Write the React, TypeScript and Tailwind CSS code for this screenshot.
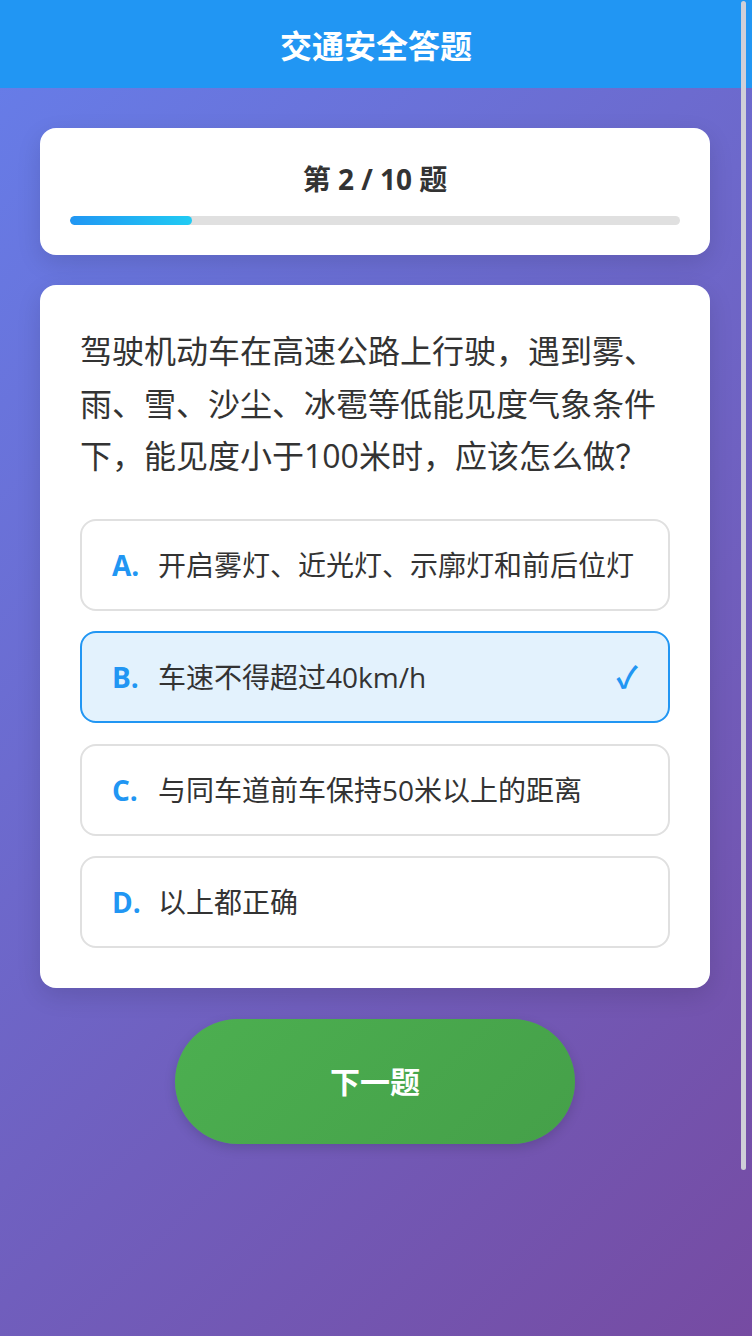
import React from "react";

const options = [
  { key: "A", text: "开启雾灯、近光灯、示廓灯和前后位灯" },
  { key: "B", text: "车速不得超过40km/h" },
  { key: "C", text: "与同车道前车保持50米以上的距离" },
  { key: "D", text: "以上都正确" },
];

export default function App() {
  const selected = "B";
  const current = 2;
  const total = 10;
  const pct = (current / total) * 100;

  return (
    <div
      className="relative h-screen overflow-hidden bg-[linear-gradient(135deg,#667eea_0%,#764ba2_100%)] text-[#333]"
      style={{ fontFamily: '"Open Sans", "Noto Sans CJK SC", sans-serif' }}
    >
      <header className="flex h-[88px] items-center justify-center bg-[#2196F3] pt-[4px]">
        <h1 className="text-[32px] font-bold leading-none text-white">交通安全答题</h1>
      </header>

      <main className="flex w-[750px] flex-col px-[40px] pt-[40px]">
        {/* progress card */}
        <section className="rounded-[16px] bg-white px-[30px] pb-[30px] pt-[30px] shadow-[0_8px_24px_rgba(0,0,0,0.12)]">
          <div className="text-center text-[28px] font-bold leading-[42px] text-[#333]">
            第 {current} / {total} 题
          </div>
          <div className="mt-[16px] h-[9px] w-full overflow-hidden rounded-full bg-[#e0e0e0]">
            <div
              className="h-full rounded-full bg-[linear-gradient(90deg,#2196F3,#21CBF3)]"
              style={{ width: `${pct}%` }}
            />
          </div>
        </section>

        {/* question card */}
        <section className="mt-[30px] rounded-[16px] bg-white p-[40px] shadow-[0_8px_24px_rgba(0,0,0,0.12)]">
          <p className="mb-[36px] text-[32px] leading-[52.5px] text-[#333]">
            驾驶机动车在高速公路上行驶，遇到雾、雨、雪、沙尘、冰雹等低能见度气象条件下，能见度小于100米时，应该怎么做？
          </p>
          <div className="flex flex-col gap-[20.5px]">
            {options.map((o) => {
              const active = o.key === selected;
              return (
                <div
                  key={o.key}
                  className={
                    active
                      ? "flex h-[92px] items-center rounded-[16px] border-2 border-[#2196F3] bg-[#e3f2fd] px-[30px]"
                      : "flex h-[92px] items-center rounded-[16px] border-2 border-[#e0e0e0] bg-white px-[30px]"
                  }
                >
                  <span className="mr-[19px] w-[27px] whitespace-nowrap text-[28px] font-bold leading-[28px] text-[#2196F3]">
                    {o.key}.
                  </span>
                  <span className="flex-1 text-[28px] leading-[28px] text-[#333]">{o.text}</span>
                  {active && (
                    <span className="text-[30px] font-semibold leading-[28px] text-[#2196F3]">✓</span>
                  )}
                </div>
              );
            })}
          </div>
        </section>

        <div className="mt-[31px] flex justify-center">
          <button className="h-[125px] w-[400px] rounded-full bg-[linear-gradient(135deg,#4CAF50,#45a049)] text-[30px] font-bold text-white shadow-[0_4px_12px_rgba(0,0,0,0.15)]">
            下一题
          </button>
        </div>
      </main>

      {/* overlay scroll thumb */}
      <div className="pointer-events-none absolute right-[6px] top-[1px] h-[1169px] w-[5px] rounded-full bg-[#cfcfd8]" />
    </div>
  );
}
